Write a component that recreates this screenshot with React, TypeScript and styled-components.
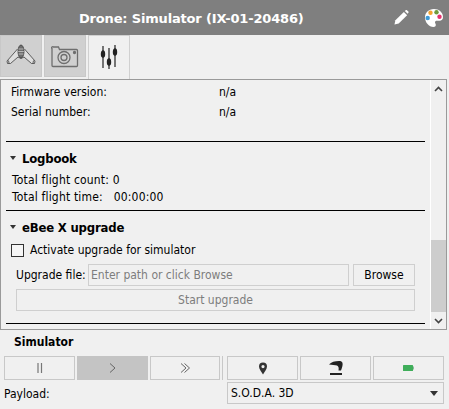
import React from 'react';
import styled, { createGlobalStyle } from 'styled-components';

const GlobalStyle = createGlobalStyle`
  html, body {
    margin: 0;
    padding: 0;
    background: #f0f0f0;
  }
  body {
    font-family: "DejaVu Sans", "Noto Sans", sans-serif;
    font-stretch: condensed;
    font-size: 12px;
    color: #000;
  }
`;

const Page = styled.div`
  width: 449px;
  height: 409px;
  display: flex;
  flex-direction: column;
  overflow: hidden;
  background: #f0f0f0;
`;

const Header = styled.header`
  height: 35px;
  flex: none;
  background: #7f7f7f;
  display: flex;
  align-items: center;
  box-sizing: border-box;
  padding: 0 5px 0 79px;
  color: #fff;
`;

const Title = styled.div`
  flex: 1;
  padding-top: 1px;
  font-family: "DejaVu Sans", sans-serif;
  font-stretch: normal;
  font-weight: 700;
  font-size: 13px;
  letter-spacing: -0.17px;
  white-space: nowrap;
`;

const HeaderIcons = styled.div`
  display: flex;
  align-items: center;
  gap: 15px;
`;

const TabBar = styled.nav`
  height: 44px;
  flex: none;
  display: flex;
  gap: 2px;
`;

const Tab = styled.div<{ $active?: boolean }>`
  width: 42px;
  height: ${(p) => (p.$active ? '44px' : '42px')};
  display: flex;
  align-items: center;
  justify-content: center;
  box-sizing: border-box;
  background: ${(p) => (p.$active ? '#f0f0f0' : '#d0d0d0')};
  border: 1px solid ${(p) => (p.$active ? '#d0d0d0' : '#c8c8c8')};
  ${(p) => (p.$active ? 'border-bottom: none; padding-bottom: 2px;' : '')}
`;

const Panel = styled.section`
  width: 447px;
  height: 251px;
  flex: none;
  box-sizing: border-box;
  border: 1px solid #9a9a9a;
  display: flex;
`;

const ScrollArea = styled.div`
  flex: 1;
  min-width: 0;
  box-sizing: border-box;
  padding: 0 5px;
  overflow: hidden;
`;

const InfoGrid = styled.div`
  display: grid;
  grid-template-columns: 208px 1fr;
  grid-auto-rows: 20px;
  align-items: center;
  padding: 2px 0 0 5px;
  height: 61px;
  box-sizing: border-box;
`;

const Divider = styled.hr`
  margin: 0;
  border: none;
  height: 1px;
  background: #000;
`;

const Section = styled.div`
  display: flex;
  flex-direction: column;
`;

const SectionHead = styled.div`
  height: 24px;
  display: flex;
  align-items: center;
  gap: 6px;
  padding: 4px 0 0 4px;
  font-weight: 700;
  font-size: 13px;
  letter-spacing: -0.2px;
`;

const Caret = styled.span`
  width: 0;
  height: 0;
  border-left: 3.5px solid transparent;
  border-right: 3.5px solid transparent;
  border-top: 4px solid #333;
`;

const FlightLines = styled.div`
  margin: 2px 0 4px;
`;

const FlightLine = styled.div`
  height: 17px;
  line-height: 17px;
  padding-left: 6px;
  white-space: pre;
  letter-spacing: 0.18px;
`;

const CheckRow = styled.label`
  height: 20px;
  margin-top: 1px;
  display: flex;
  align-items: center;
  gap: 6px;
  padding-left: 5px;
`;

const CheckBox = styled.span`
  width: 13px;
  height: 13px;
  box-sizing: border-box;
  border: 1px solid #333;
  background: #f6f6f6;
`;

const FileRow = styled.div`
  display: flex;
  align-items: center;
  margin-top: 4px;
  padding-left: 10px;
  height: 22px;
`;

const FileLabel = styled.span`
  width: 72px;
  flex: none;
`;

const PathInput = styled.div`
  width: 261px;
  height: 22px;
  box-sizing: border-box;
  border: 1px solid #cfcfcf;
  padding-left: 2px;
  line-height: 20px;
  color: #7d7d7d;
  white-space: nowrap;
`;

const BrowseButton = styled.div`
  width: 62px;
  height: 22px;
  margin-left: 4px;
  box-sizing: border-box;
  border: 1px solid #cfcfcf;
  text-align: center;
  line-height: 20px;
`;

const StartButton = styled.div`
  width: 399px;
  height: 22px;
  margin: 3px 0 12px 10px;
  box-sizing: border-box;
  border: 1px solid #cfcfcf;
  text-align: center;
  line-height: 21px;
  color: #7d7d7d;
`;

const Scrollbar = styled.div`
  width: 15px;
  flex: none;
  border-left: 1px solid #fff;
  display: flex;
  flex-direction: column;
  align-items: center;
  justify-content: space-between;
`;

const ScrollEnd = styled.div`
  height: 17px;
  display: flex;
  align-items: center;
  justify-content: center;
`;

const ScrollTrack = styled.div`
  flex: 1;
  width: 100%;
  display: flex;
  align-items: flex-end;
`;

const ScrollThumb = styled.div`
  width: 100%;
  height: 72px;
  background: #cdcdcd;
`;

const Footer = styled.div`
  flex: 1;
  display: flex;
  flex-direction: column;
  padding: 4px 4px 0 4px;
`;

const FooterTitle = styled.div`
  height: 22px;
  line-height: 17px;
  padding-left: 10px;
  font-weight: 700;
  font-size: 12px;
`;

const ControlRow = styled.div`
  display: flex;
  gap: 2px;
`;

const ControlGroup = styled.div`
  display: flex;
  gap: 2px;
`;

const ControlSep = styled.div`
  width: 1px;
  margin-right: 2px;
  background: #c8c8c8;
`;

const ControlButton = styled.div<{ $on?: boolean; $narrow?: boolean }>`
  width: ${(p) => (p.$narrow ? '70px' : '71px')};
  height: 24px;
  box-sizing: border-box;
  display: flex;
  align-items: center;
  justify-content: center;
  background: ${(p) => (p.$on ? '#c4c4c4' : 'transparent')};
  border: 1px solid ${(p) => (p.$on ? '#c4c4c4' : '#c8c8c8')};
`;

const PayloadRow = styled.div`
  display: flex;
  align-items: center;
  margin-top: 2px;
`;

const PayloadLabel = styled.span`
  width: 223px;
  flex: none;
  padding-top: 1px;
`;

const Select = styled.div`
  width: 217px;
  height: 22px;
  box-sizing: border-box;
  border: 1px solid #c8c8c8;
  display: flex;
  align-items: center;
  justify-content: space-between;
  padding: 0 5px 0 3px;
`;

const SelectArrow = styled.span`
  width: 0;
  height: 0;
  border-left: 4.5px solid transparent;
  border-right: 4.5px solid transparent;
  border-top: 5px solid #333;
`;

function DroneIcon() {
  return (
    <svg width="30" height="24" viewBox="0 0 30 24" fill="none" stroke="#3c3c3c" strokeWidth="0.800">
      <path d="M11.500 5 L1 17 L1.500 19.500 L4.500 19.500 L12 13 L15 14.500 L18 13 L25.500 19.500 L28.500 19.500 L29 17 L18.500 5" fill="#dedede" />
      <path d="M2.500 16.500 L3 19 M27.500 16.500 L27 19" />
      <ellipse cx="15" cy="7.500" rx="3" ry="6.500" fill="#6e6e6e" />
      <path d="M12.500 5h5M12.200 7.500h5.600M12.500 10h5" stroke="#d8d8d8" strokeWidth="0.700" />
    </svg>
  );
}

function CameraIcon() {
  return (
    <svg width="28" height="23" viewBox="0 0 28 23" fill="none" stroke="#6e6e6e" strokeWidth="1.300">
      <path d="M2.500 2h5l1 2.500h17a1 1 0 0 1 1 1v15a1 1 0 0 1 -1 1H2a1 1 0 0 1 -1 -1V3.500a1 1 0 0 1 1.500 -1.500z" />
      <circle cx="13" cy="12.500" r="6" />
      <circle cx="13" cy="12.500" r="3" />
      <circle cx="23.500" cy="7.500" r="1" fill="#6e6e6e" />
    </svg>
  );
}

function SlidersIcon() {
  return (
    <svg width="18" height="24" viewBox="0 0 18 24" fill="#222" stroke="#222" strokeWidth="1.200">
      <path d="M3 1v22M9 3v21M15 0v22" fill="none" />
      <ellipse cx="3" cy="9" rx="1.600" ry="3.200" />
      <ellipse cx="9" cy="17" rx="1.600" ry="3.200" />
      <ellipse cx="15" cy="7" rx="1.600" ry="3.200" />
    </svg>
  );
}

function PencilIcon() {
  return (
    <svg width="15" height="15" viewBox="0 0 16 16" fill="#fff">
      <path d="M0.500 15.500l1-4.500L10.500 2l3.500 3.500-9 9z" />
      <path d="M11.500 1l1-.8a1 1 0 0 1 1.300 0l1.500 1.500a1 1 0 0 1 0 1.300l-.8 1z" />
    </svg>
  );
}

function PaletteIcon() {
  return (
    <svg width="20" height="20" viewBox="0 0 20 20">
      <path
        d="M10 1C4.500 1 1 4.600 1 9.500S5 19 9.500 19c1.500 0 2.300-.8 2.300-2 0-1.500-.8-1.800-.8-2.800 0-1 .8-1.500 2-1.500h2.500c2 0 3.500-1.200 3.500-3.700C19 4.500 15 1 10 1z"
        fill="#fff"
      />
      <circle cx="6.500" cy="4.800" r="2.200" fill="#f5a32e" />
      <circle cx="12.500" cy="4.300" r="2.200" fill="#6f9a3c" />
      <circle cx="3.700" cy="10" r="2.200" fill="#3e9ad6" />
      <circle cx="15.500" cy="8.800" r="2.200" fill="#e5336f" />
    </svg>
  );
}

function Chevron({ up }: { up?: boolean }) {
  return (
    <svg width="9" height="6" viewBox="0 0 9 6" fill="none" stroke="#444" strokeWidth="1.600">
      <path d={up ? 'M1 5l3.500-3.500L8 5' : 'M1 1l3.500 3.500L8 1'} />
    </svg>
  );
}

function PinIcon() {
  return (
    <svg width="10" height="13" viewBox="0 0 10 13">
      <path
        fillRule="evenodd"
        d="M5 0.500a4 4 0 0 1 4 4c0 2.500-2.500 5.500-4 8-1.500-2.500-4-5.500-4-8a4 4 0 0 1 4-4zM5 3a1.600 1.600 0 1 0 0 3.200A1.600 1.600 0 0 0 5 3z"
        fill="#333"
      />
    </svg>
  );
}

function LandingIcon() {
  return (
    <svg width="14" height="16" viewBox="0 0 14 16" fill="#222">
      <path d="M0 4.500C2 2 6 1 10 1c2 0 3 .5 3.500 2 .5 2-.5 5-1.500 7.500H9.500C10 8 9.500 6 8 5.500 6 5 3 5 0 4.500z" />
      <rect x="1" y="13" width="12" height="2" />
    </svg>
  );
}

function BatteryIcon() {
  return (
    <svg width="11" height="6" viewBox="0 0 11 6">
      <rect x="0" y="0" width="10" height="6" rx="0.500" fill="#3fae5a" />
      <rect x="10" y="1.500" width="1" height="3" fill="#8ab89a" />
    </svg>
  );
}

function PauseGlyph() {
  return (
    <svg width="6" height="10" viewBox="0 0 6 10" stroke="#777" strokeWidth="1.200">
      <path d="M1 0v10M4.500 0v10" />
    </svg>
  );
}

function PlayGlyph() {
  return (
    <svg width="7" height="10" viewBox="0 0 7 10" fill="none" stroke="#666" strokeWidth="1">
      <path d="M1 .5L6 5 1 9.500" />
    </svg>
  );
}

function FastGlyph() {
  return (
    <svg width="11" height="10" viewBox="0 0 11 10" fill="none" stroke="#666" strokeWidth="1">
      <path d="M1 .5L6 5 1 9.500M4.500 .5L9.500 5l-5 4.500" />
    </svg>
  );
}

export default function App() {
  return (
    <Page>
      <GlobalStyle />
      <Header>
        <Title>Drone: Simulator (IX-01-20486)</Title>
        <HeaderIcons>
          <PencilIcon />
          <PaletteIcon />
        </HeaderIcons>
      </Header>

      <TabBar>
        <Tab><DroneIcon /></Tab>
        <Tab><CameraIcon /></Tab>
        <Tab $active><SlidersIcon /></Tab>
      </TabBar>

      <Panel>
        <ScrollArea>
          <InfoGrid>
            <span>Firmware version:</span>
            <span>n/a</span>
            <span>Serial number:</span>
            <span>n/a</span>
          </InfoGrid>
          <Divider />
          <Section>
            <SectionHead><Caret />Logbook</SectionHead>
            <FlightLines>
              <FlightLine>Total flight count: 0</FlightLine>
              <FlightLine>Total flight time:   00:00:00</FlightLine>
            </FlightLines>
          </Section>
          <Divider />
          <Section>
            <SectionHead><Caret />eBee X upgrade</SectionHead>
            <CheckRow><CheckBox />Activate upgrade for simulator</CheckRow>
            <FileRow>
              <FileLabel>Upgrade file:</FileLabel>
              <PathInput>Enter path or click Browse</PathInput>
              <BrowseButton>Browse</BrowseButton>
            </FileRow>
            <StartButton>Start upgrade</StartButton>
          </Section>
          <Divider />
        </ScrollArea>
        <Scrollbar>
          <ScrollEnd><Chevron up /></ScrollEnd>
          <ScrollTrack><ScrollThumb /></ScrollTrack>
          <ScrollEnd><Chevron /></ScrollEnd>
        </Scrollbar>
      </Panel>

      <Footer>
        <FooterTitle>Simulator</FooterTitle>
        <ControlRow>
          <ControlGroup>
            <ControlButton><PauseGlyph /></ControlButton>
            <ControlButton $on><PlayGlyph /></ControlButton>
            <ControlButton $narrow><FastGlyph /></ControlButton>
          </ControlGroup>
          <ControlSep />
          <ControlGroup>
            <ControlButton><PinIcon /></ControlButton>
            <ControlButton><LandingIcon /></ControlButton>
            <ControlButton><BatteryIcon /></ControlButton>
          </ControlGroup>
        </ControlRow>
        <PayloadRow>
          <PayloadLabel>Payload:</PayloadLabel>
          <Select>
            S.O.D.A. 3D
            <SelectArrow />
          </Select>
        </PayloadRow>
      </Footer>
    </Page>
  );
}
